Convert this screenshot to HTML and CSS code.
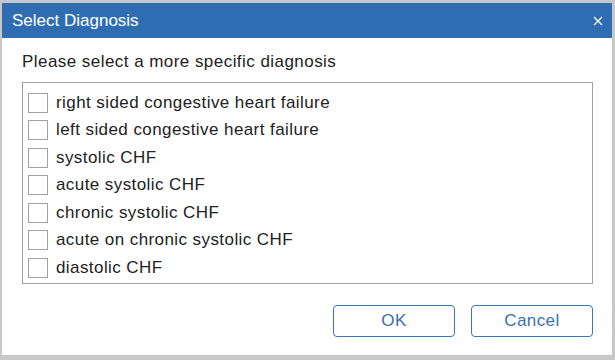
FILE: index.html
```html
<!DOCTYPE html>
<html>
<head>
    <link rel="stylesheet" href="styles.css">
</head>
<body>
    <div class="dialog">
        <div class="titlebar">
            <span class="title">Select Diagnosis</span>
            <svg class="close" width="10" height="10" viewBox="0 0 10 10">
                <path d="M1 1 L9 9 M9 1 L1 9" stroke="#fff" stroke-width="1.3" fill="none" />
            </svg>
        </div>

        <div class="content">
            <p class="prompt">Please select a more specific diagnosis</p>

            <div class="list">
                <label class="row"><span class="box"></span>right sided congestive heart failure</label>
                <label class="row"><span class="box"></span>left sided congestive heart failure</label>
                <label class="row"><span class="box"></span>systolic CHF</label>
                <label class="row"><span class="box"></span>acute systolic CHF</label>
                <label class="row"><span class="box"></span>chronic systolic CHF</label>
                <label class="row"><span class="box"></span>acute on chronic systolic CHF</label>
                <label class="row"><span class="box"></span>diastolic CHF</label>
            </div>

            <div class="footer">
                <button type="button" class="btn">OK</button>
                <button type="button" class="btn">Cancel</button>
            </div>
        </div>
    </div>
</body>
</html>
```

FILE: styles.css
```css
body {
    margin: 0;
    background-color: #c8c8c8;
    font-family: "Liberation Sans", Arial, sans-serif;
}

.dialog {
    width: 610px;
    height: 352px;
    margin: 3px 0 0 2px;
    background-color: #fff;
}

.titlebar {
    height: 35px;
    padding: 0 9px 0 10px;
    display: flex;
    align-items: center;
    justify-content: space-between;
    background-color: #2f6db3;
    color: #fff;
}

.title {
    font-size: 17px;
}

.close {
    margin-top: 1px;
}

.content {
    padding: 0 19px 0 20px;
}

.prompt {
    margin: 0;
    padding-top: 14px;
    height: 30px;
    font-size: 17px;
    letter-spacing: 0.45px;
    line-height: 20px;
    color: #222;
}

.list {
    height: 202px;
    padding: 6px 5px 0;
    border: 1px solid #a0a0a0;
    box-sizing: border-box;
}

.row {
    display: flex;
    align-items: center;
    height: 27.5px;
    font-size: 17px;
    letter-spacing: 0.42px;
    color: #222;
}

.box {
    width: 18px;
    height: 18px;
    margin-right: 8px;
    border: 1px solid #a0a0a0;
    background-color: #fff;
}

.footer {
    display: flex;
    justify-content: flex-end;
    gap: 16px;
    padding-top: 21px;
}

.btn {
    width: 122px;
    height: 32px;
    border: 1px solid #3a74bb;
    border-radius: 4px;
    background-color: #fff;
    color: #3a6fb0;
    font-family: "Liberation Sans", Arial, sans-serif;
    font-size: 17px;
    letter-spacing: 0.4px;
}
```
